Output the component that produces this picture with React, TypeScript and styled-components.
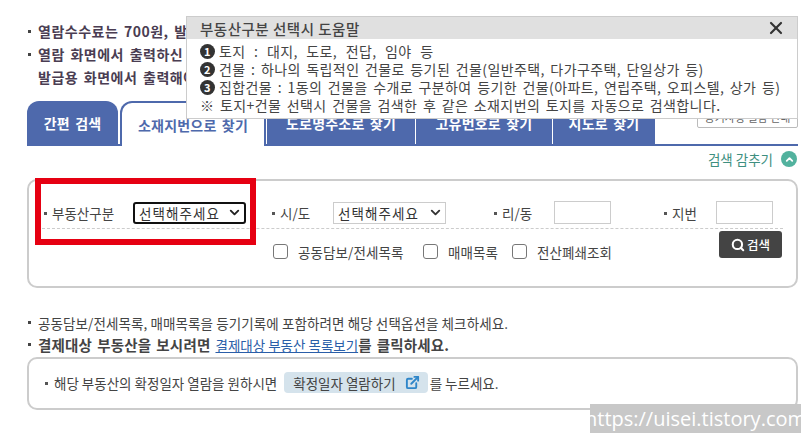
import styled, { createGlobalStyle } from "styled-components";
import { ChevronDown, ChevronUp, ExternalLink, Search, X } from "lucide-react";

const GlobalStyle = createGlobalStyle`
  html, body { margin: 0; padding: 0; background: #fff; }
  body { font-family: "Noto Sans CJK KR", "Liberation Sans", sans-serif; overflow: hidden; }
`;

const helpLines = [
  { num: "1", text: "토지 : 대지, 도로, 전답, 임야 등", wide: true },
  { num: "2", text: "건물 : 하나의 독립적인 건물로 등기된 건물(일반주택, 다가구주택, 단일상가 등)", wide: false },
  { num: "3", text: "집합건물 : 1동의 건물을 수개로 구분하여 등기한 건물(아파트, 연립주택, 오피스텔, 상가 등)", wide: false },
];

const tabs = [
  { label: "간편 검색", width: 91, active: false },
  { label: "소재지번으로 찾기", width: 146, active: true },
  { label: "도로명주소로 찾기", width: 149, active: false },
  { label: "고유번호로 찾기", width: 137, active: false },
  { label: "지도로 찾기", width: 103, active: false },
];

export default function App() {
  return (
    <Page>
      <GlobalStyle />
      <TopNotes>
        <Note>열람수수료는 700원, 발급</Note>
        <Note>열람 화면에서 출력하신</Note>
        <NoteCont>발급용 화면에서 출력해야</NoteCont>
      </TopNotes>

      <TabBar>
        {tabs.map((tab) => (
          <Tab key={tab.label} $active={tab.active} $width={tab.width}>
            {tab.label}
          </Tab>
        ))}
        <HelpButton>등기사항 열람 안내</HelpButton>
      </TabBar>

      <ToggleRow>
        검색 감추기
        <ToggleIcon>
          <ChevronUp size={11} strokeWidth={4} color="#fff" />
        </ToggleIcon>
      </ToggleRow>

      <SearchBox>
        <FieldRow>
          <Field $width={228}>
            <FieldLabel $width={91}>부동산구분</FieldLabel>
            <SelectBox $focused>
              선택해주세요
              <ChevronDown size={15} strokeWidth={3} color="#222" />
            </SelectBox>
          </Field>
          <Field $width={222}>
            <FieldLabel $width={63}>시/도</FieldLabel>
            <SelectBox>
              선택해주세요
              <ChevronDown size={15} strokeWidth={3} color="#333" />
            </SelectBox>
          </Field>
          <Field $width={170}>
            <FieldLabel $width={62}>리/동</FieldLabel>
            <TextBox />
          </Field>
          <Field>
            <FieldLabel $width={54}>지번</FieldLabel>
            <TextBox />
          </Field>
        </FieldRow>
        <OptionRow>
          <Option $width={150}>
            <CheckBox />
            공동담보/전세목록
          </Option>
          <Option $width={89}>
            <CheckBox />
            매매목록
          </Option>
          <Option>
            <CheckBox />
            전산폐쇄조회
          </Option>
          <SearchButton>
            <Search size={14} strokeWidth={3.5} color="#fff" />
            검색
          </SearchButton>
        </OptionRow>
      </SearchBox>

      <BottomNotes>
        <SmallNote>공동담보/전세목록, 매매목록을 등기기록에 포함하려면 해당 선택옵션을 체크하세요.</SmallNote>
        <SmallNote $bold>
          결제대상 부동산을 보시려면 <NoteLink>결제대상 부동산 목록보기</NoteLink>를 클릭하세요.
        </SmallNote>
      </BottomNotes>

      <ConfirmBox>
        <ConfirmText>해당 부동산의 확정일자 열람을 원하시면</ConfirmText>
        <ConfirmButton>
          확정일자 열람하기
          <ExternalLink size={15} strokeWidth={3} color="#2f86c9" />
        </ConfirmButton>
        <ConfirmTail>를 누르세요.</ConfirmTail>
      </ConfirmBox>

      <HelpPopup>
        <PopupHeader>
          부동산구분 선택시 도움말
          <X size={20} strokeWidth={2.6} color="#333" />
        </PopupHeader>
        <PopupBody>
          {helpLines.map((line) => (
            <PopupLine key={line.num} $wide={line.wide}>
              <NumBadge>{line.num}</NumBadge>
              {line.text}
            </PopupLine>
          ))}
          <PopupLine>※ 토지+건물 선택시 건물을 검색한 후 같은 소재지번의 토지를 자동으로 검색합니다.</PopupLine>
        </PopupBody>
      </HelpPopup>

      <RedFrame />
      <Watermark>https://uisei.tistory.com</Watermark>
    </Page>
  );
}

const Page = styled.div`
  position: relative;
  width: 809px;
  height: 440px;
  box-sizing: border-box;
  padding: 20px 11px 0 27px;
  overflow: hidden;
  color: #444;
`;

const TopNotes = styled.div`
  display: flex;
  flex-direction: column;
  height: 81px;
`;

const Note = styled.div`
  position: relative;
  padding-left: 11px;
  font-size: 14px;
  font-weight: 700;
  line-height: 22.5px;
  letter-spacing: 0.5px;
  word-spacing: 2px;
  color: #4a3d52;
  white-space: nowrap;

  &::before {
    content: "";
    position: absolute;
    left: 1px;
    top: 10px;
    width: 3px;
    height: 3px;
    background: #444;
  }
`;

const NoteCont = styled(Note)`
  margin-top: 1px;

  &::before {
    display: none;
  }
`;

const TabBar = styled.div`
  position: relative;
  display: flex;
  align-items: flex-end;
  height: 43px;
  border-bottom: 2px solid #4e69ac;
`;

const Tab = styled.div<{ $active: boolean; $width: number }>`
  box-sizing: border-box;
  width: ${(p) => p.$width}px;
  height: ${(p) => (p.$active ? "45px" : "43px")};
  margin-bottom: ${(p) => (p.$active ? "-2px" : "0")};
  display: flex;
  align-items: center;
  justify-content: center;
  font-size: 14px;
  font-weight: 700;
  letter-spacing: 0.2px;
  word-spacing: 2px;
  color: ${(p) => (p.$active ? "#4e69ac" : "#fff")};
  background: ${(p) => (p.$active ? "#fff" : "#4e69ac")};
  border: ${(p) => (p.$active ? "2px solid #4e69ac" : "none")};
  border-bottom: none;
  border-left: ${(p) => (p.$active ? "2px solid #4e69ac" : "1px solid #fff")};
  border-radius: ${(p) => (p.$active ? "12px 0 0 0" : "0")};

  &:first-child {
    border-left: none;
    border-radius: 12px 12px 0 0;
    margin-right: 2px;
  }
`;

const HelpButton = styled.div`
  position: absolute;
  right: 0;
  top: 4px;
  box-sizing: border-box;
  width: 101px;
  height: 23px;
  display: flex;
  align-items: center;
  justify-content: center;
  font-size: 11px;
  color: #666;
  border: 1px solid #bbb;
  border-radius: 2px;
`;

const ToggleRow = styled.div`
  display: flex;
  align-items: center;
  justify-content: flex-end;
  gap: 8px;
  height: 26px;
  padding-right: 1px;
  font-size: 13.5px;
  color: #3e8f80;
`;

const ToggleIcon = styled.span`
  display: flex;
  align-items: center;
  justify-content: center;
  width: 16px;
  height: 16px;
  border-radius: 50%;
  background: #52b29e;
`;

const SearchBox = styled.div`
  box-sizing: border-box;
  height: 109px;
  margin-top: 7px;
  padding: 20px 13px 0 13px;
  border: 2px solid #ccc;
  border-radius: 10px;
`;

const FieldRow = styled.div`
  display: flex;
  align-items: center;
  height: 27px;
  border-bottom: 1px dashed #ccc;
`;

const Field = styled.div<{ $width?: number }>`
  display: flex;
  align-items: center;
  flex: none;
  width: ${(p) => (p.$width ? `${p.$width}px` : "auto")};
  margin-top: -4px;
`;

const FieldLabel = styled.span<{ $width: number }>`
  position: relative;
  flex: none;
  width: ${(p) => p.$width}px;
  box-sizing: border-box;
  padding-left: 10px;
  font-size: 13.5px;
  color: #444;

  &::before {
    content: "";
    position: absolute;
    left: 2px;
    top: 9px;
    width: 3px;
    height: 3px;
    background: #555;
  }
`;

const SelectBox = styled.div<{ $focused?: boolean }>`
  box-sizing: border-box;
  width: 113px;
  height: 22px;
  display: flex;
  align-items: center;
  justify-content: space-between;
  padding: 0 2px 0 4px;
  font-size: 13.5px;
  letter-spacing: 1.1px;
  color: #333;
  background: #fff;
  border: ${(p) => (p.$focused ? "2px solid #111" : "1px solid #ccc")};
  border-radius: ${(p) => (p.$focused ? "3px" : "0")};
`;

const TextBox = styled.div`
  box-sizing: border-box;
  width: 57px;
  height: 23px;
  border: 1px solid #ccc;
`;

const OptionRow = styled.div`
  position: relative;
  display: flex;
  align-items: center;
  height: 46px;
  padding-left: 231px;
`;

const Option = styled.label<{ $width?: number }>`
  display: flex;
  align-items: center;
  gap: 10px;
  flex: none;
  width: ${(p) => (p.$width ? `${p.$width}px` : "auto")};
  margin-top: -1px;
  font-size: 13.5px;
  letter-spacing: 0.1px;
  color: #444;
  white-space: nowrap;
`;

const CheckBox = styled.span`
  flex: none;
  box-sizing: border-box;
  width: 15px;
  height: 15px;
  border: 1px solid #777;
  border-radius: 3px;
  background: #fff;
`;

const SearchButton = styled.div`
  position: absolute;
  right: 1px;
  top: 2px;
  box-sizing: border-box;
  width: 63px;
  height: 27px;
  display: flex;
  align-items: center;
  justify-content: center;
  gap: 2px;
  font-size: 12.5px;
  font-weight: 500;
  color: #fff;
  background: #444;
  border-radius: 3px;
`;

const BottomNotes = styled.div`
  margin-top: 24px;
`;

const SmallNote = styled.div<{ $bold?: boolean }>`
  position: relative;
  padding-left: 11px;
  font-size: ${(p) => (p.$bold ? "14.5px" : "13.5px")};
  font-weight: ${(p) => (p.$bold ? 700 : 400)};
  letter-spacing: ${(p) => (p.$bold ? "0.2px" : "0.1px")};
  word-spacing: ${(p) => (p.$bold ? "1.5px" : "0")};
  line-height: 22px;
  color: #444;
  white-space: nowrap;

  &::before {
    content: "";
    position: absolute;
    left: 1px;
    top: 9px;
    width: 3px;
    height: 3px;
    background: #444;
  }
`;

const NoteLink = styled.span`
  font-size: 13.5px;
  font-weight: 400;
  letter-spacing: 0;
  word-spacing: 0;
  color: #2a5ea8;
  text-decoration: underline;
`;

const ConfirmBox = styled.div`
  box-sizing: border-box;
  height: 53px;
  margin-top: 1px;
  display: flex;
  align-items: center;
  padding: 0 0 2px 15px;
  border: 2px solid #ccc;
  border-radius: 10px;
  font-size: 13.5px;
  color: #444;
`;

const ConfirmText = styled.span`
  position: relative;
  padding-left: 10px;

  &::before {
    content: "";
    position: absolute;
    left: 1px;
    top: 9px;
    width: 3px;
    height: 3px;
    background: #555;
  }
`;

const ConfirmButton = styled.span`
  display: flex;
  align-items: center;
  gap: 9px;
  margin-left: 7px;
  padding: 0 8px 0 9px;
  height: 21px;
  background: #d5e3ec;
  border-radius: 4px;
`;

const ConfirmTail = styled.span`
  margin-left: 2px;
`;

const HelpPopup = styled.div`
  position: absolute;
  left: 186px;
  top: 16px;
  box-sizing: border-box;
  width: 612px;
  height: 103px;
  background: #fff;
  border: 1px solid #ccc;
`;

const PopupHeader = styled.div`
  display: flex;
  align-items: center;
  justify-content: space-between;
  height: 22px;
  padding: 0 11px 0 13px;
  background: #e0e0e0;
  font-size: 14.5px;
  font-weight: 500;
  letter-spacing: 0.5px;
  color: #444;
`;

const PopupBody = styled.div`
  padding: 3px 0 0 13px;
`;

const PopupLine = styled.div<{ $wide?: boolean }>`
  display: flex;
  align-items: center;
  gap: 4px;
  height: 18px;
  font-size: 14px;
  letter-spacing: 0.4px;
  word-spacing: ${(p) => (p.$wide ? "5px" : "2px")};
  color: #444;
  white-space: nowrap;
`;

const NumBadge = styled.span`
  flex: none;
  width: 15px;
  height: 15px;
  display: flex;
  align-items: center;
  justify-content: center;
  border-radius: 50%;
  background: #333;
  color: #fff;
  font-size: 11px;
  font-weight: 700;
`;

const RedFrame = styled.div`
  position: absolute;
  left: 35px;
  top: 178px;
  box-sizing: border-box;
  width: 221px;
  height: 67px;
  border: 6px solid #e60012;
  pointer-events: none;
`;

const Watermark = styled.div`
  position: absolute;
  left: 590px;
  top: 404px;
  width: 211px;
  height: 29px;
  display: flex;
  align-items: center;
  justify-content: center;
  background: #c8c8c8;
  color: #fff;
  font-family: "Open Sans", sans-serif;
  font-size: 20px;
  white-space: nowrap;
`;
